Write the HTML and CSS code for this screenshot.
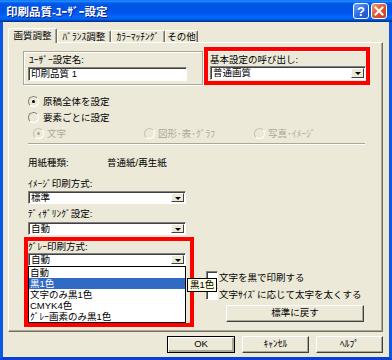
FILE: index.html
```html
<!DOCTYPE html>
<html lang="ja">
<head>
    <meta charset="UTF-8">
    <title>印刷品質-ﾕｰｻﾞｰ設定</title>
    <link rel="stylesheet" href="styles.css">
</head>
<body>

<div class="window">
    <div class="titlebar">
        <span class="title">印刷品質-ﾕｰｻﾞｰ設定</span>
        <span class="tb-btn help">?</span>
        <span class="tb-btn close">
            <svg width="10" height="10" viewBox="0 0 10 10"><path d="M1.5 1.5 L8.5 8.5 M8.5 1.5 L1.5 8.5" stroke="#fff" stroke-width="2" stroke-linecap="square"/></svg>
        </span>
    </div>

    <div class="frame">
        <div class="tabs">
            <div class="tab active" style="width:49px">画質調整</div>
            <div class="tab" style="width:54px">ﾊﾞﾗﾝｽ調整</div>
            <div class="tab" style="width:54px">ｶﾗｰﾏｯﾁﾝｸﾞ</div>
            <div class="tab" style="width:33px">その他</div>
        </div>

        <div class="panel">
            <div class="top-row">
                <div class="group name-group">
                    <div class="label">ﾕｰｻﾞｰ設定名:</div>
                    <div class="textbox">印刷品質 1</div>
                </div>
                <div class="mark preset">
                    <div class="label">基本設定の呼び出し:</div>
                    <div class="combo wide"><span>普通画質</span><i class="arrow"></i></div>
                </div>
            </div>

            <div class="radios">
                <div class="radio-row"><span class="radio on"></span>原稿全体を設定</div>
                <div class="radio-row"><span class="radio"></span>要素ごとに設定</div>
                <div class="radio-row sub disabled">
                    <div class="opt"><span class="radio on"></span>文字</div>
                    <div class="opt"><span class="radio"></span>図形･表･ｸﾞﾗﾌ</div>
                    <div class="opt"><span class="radio"></span>写真･ｲﾒｰｼﾞ</div>
                </div>
            </div>

            <div class="sep"></div>

            <div class="lower">
                <div class="left-col">
                    <div class="paper"><span class="paper-label">用紙種類:</span><span>普通紙/再生紙</span></div>

                    <div class="field-label first">ｲﾒｰｼﾞ印刷方式:</div>
                    <div class="combo"><span>標準</span><i class="arrow"></i></div>

                    <div class="field-label">ﾃﾞｨｻﾞﾘﾝｸﾞ設定:</div>
                    <div class="combo"><span>自動</span><i class="arrow"></i></div>

                    <div class="mark gray">
                        <div class="field-label">ｸﾞﾚｰ印刷方式:</div>
                        <div class="combo"><span>自動</span><i class="arrow"></i></div>
                        <div class="droplist">
                            <div class="item">自動</div>
                            <div class="item selected">黒1色</div>
                            <div class="item">文字のみ黒1色</div>
                            <div class="item">CMYK4色</div>
                            <div class="item">ｸﾞﾚｰ画素のみ黒1色</div>
                        </div>
                        <div class="tooltip">黒1色</div>
                    </div>
                </div>

                <div class="right-col">
                    <div class="check-row"><span class="checkbox"></span>文字を黒で印刷する</div>
                    <div class="check-row"><span class="checkbox"></span>文字ｻｲｽﾞに応じて太字を太くする</div>
                    <div class="button reset">標準に戻す</div>
                </div>
            </div>
        </div>

        <div class="buttons">
            <div class="button default" style="width:68px">OK</div>
            <div class="button" style="width:67px">ｷｬﾝｾﾙ</div>
            <div class="button" style="width:67px">ﾍﾙﾌﾟ</div>
        </div>
    </div>
</div>

</body>
</html>
```

FILE: styles.css
```css
* {
    box-sizing: border-box;
}
body {
    margin: 0;
    font-family: "Liberation Sans", "Noto Sans CJK JP", sans-serif;
    font-size: 9.5px;
    color: #000;
    background: #ECE9D8;
}
.window {
    width: 392px;
    height: 360px;
    display: flex;
    flex-direction: column;
}
.titlebar {
    height: 22px;
    display: flex;
    align-items: center;
    padding: 0 5px 0 6px;
    background: linear-gradient(to bottom, #0058EE 0%, #3593FF 4%, #288EFF 6%, #127DFF 8%, #036FFC 10%, #0262EE 14%, #0057E5 20%, #0054E3 24%, #0055EB 56%, #005BF5 66%, #026AFE 76%, #0062EF 86%, #0052D6 92%, #0040AB 94%, #003092 100%);
}
.title {
    flex: 1;
    color: #fff;
    font-weight: bold;
    font-size: 11.5px;
    text-shadow: 1px 1px #0A1E8C;
}
.tb-btn {
    width: 16px;
    height: 16px;
    margin-left: 2px;
    border: 1px solid #fff;
    border-radius: 3px;
    display: flex;
    align-items: center;
    justify-content: center;
    color: #fff;
    font-weight: bold;
    font-size: 13px;
}
.help {
    background: linear-gradient(135deg, #6DA2F8, #2663DE 60%, #1F55CC);
}
.close {
    background: linear-gradient(135deg, #F0A07E, #E0562F 50%, #C3401F);
}
.frame {
    flex: 1;
    background: #ECE9D8;
    border-left: 3px solid #0B58E6;
    border-right: 3px solid #0B58E6;
    border-bottom: 3px solid #0841D3;
    padding: 6px 6px 0 5px;
}

/* tabs */
.tabs {
    display: flex;
    align-items: flex-end;
    height: 14px;
}
.tab {
    height: 12px;
    line-height: 11px;
    text-align: center;
    border-top: 1px solid #fff;
    border-left: 1px solid #fff;
    border-right: 1px solid #716F64;
    box-shadow: inset -1px 0 #ACA899;
    border-radius: 2px 2px 0 0;
    white-space: nowrap;
}
.tab.active {
    height: 15px;
    line-height: 13px;
    margin-bottom: -1px;
    position: relative;
    z-index: 1;
    background: #ECE9D8;
}
.panel {
    height: 290px;
    border: 1px solid;
    border-color: #fff #716F64 #716F64 #fff;
    box-shadow: inset -1px -1px #ACA899;
    padding-top: 4px;
}

/* top row */
.top-row {
    display: flex;
    align-items: flex-start;
    padding-left: 14px;
}
.group {
    border: 1px solid #ACA899;
    box-shadow: inset 1px 1px #fff, 1px 1px #fff;
}
.name-group {
    margin-top: 4px;
    width: 180px;
    height: 34px;
    padding: 2px 0 0 4px;
}
.label {
    line-height: 12px;
    padding-left: 1px;
    white-space: nowrap;
}
.textbox {
    margin-top: 1px;
    width: 159px;
    height: 14px;
    line-height: 12px;
    padding-left: 2px;
    background: #fff;
    border: 1px solid;
    border-color: #808080 #fff #fff #808080;
    box-shadow: inset 1px 1px #404040;
}
.mark {
    border: 4px solid #FF0000;
}
.preset {
    margin-left: 1px;
    width: 166px;
    height: 38px;
    padding: 2px 0 0 2px;
    box-shadow: inset 0 1px #fff;
}
.preset .label {
    padding-left: 0;
    padding-top: 1px;
    line-height: 12px;
}

/* combo boxes */
.combo {
    width: 158px;
    height: 13px;
    display: flex;
    background: #fff;
    border: 1px solid;
    border-color: #808080 #fff #fff #808080;
    box-shadow: inset 1px 1px #404040;
    padding: 1px 1px 1px 2px;
}
.combo.wide {
    width: 156px;
    height: 14px;
}
.combo span {
    flex: 1;
    line-height: 11px;
    margin-top: -1px;
    white-space: nowrap;
}
.arrow {
    width: 13px;
    background: #ECE9D8;
    border: 1px solid;
    border-color: #fff #404040 #404040 #fff;
    position: relative;
}
.arrow::after {
    content: "";
    position: absolute;
    left: 3px;
    top: 3px;
    border-left: 3px solid transparent;
    border-right: 3px solid transparent;
    border-top: 3px solid #000;
}

/* radios */
.radios {
    margin-top: 8px;
    padding-left: 19px;
}
.radio-row {
    height: 16px;
    display: flex;
    align-items: center;
    white-space: nowrap;
}
.radio {
    width: 11px;
    height: 11px;
    border-radius: 50%;
    margin-right: 4px;
    border: 1px solid;
    border-color: #808080 #fff #fff #808080;
    background: #ECE9D8;
    position: relative;
}
.radio.on::after {
    content: "";
    position: absolute;
    left: 3px;
    top: 3px;
    width: 3px;
    height: 3px;
    border-radius: 50%;
    background: #000;
}
.radio-row.sub {
    padding-left: 5px;
    display: grid;
    grid-template-columns: 111px 110px auto;
}
.opt {
    display: flex;
    align-items: center;
}
.disabled {
    color: #ACA899;
}
.disabled .radio {
    margin-right: 3px;
    border-color: #C5C2B2 #fff #fff #C5C2B2;
}
.disabled .radio.on::after {
    background: #ACA899;
}
.sep {
    margin: 2px 17px 0 19px;
    height: 2px;
    border-top: 1px solid #ACA899;
    border-bottom: 1px solid #fff;
}

/* lower part */
.lower {
    margin-top: 12px;
    padding-left: 15px;
    display: flex;
}
.left-col {
    width: 170px;
}
.left-col > .combo,
.left-col > .field-label,
.paper {
    margin-left: 4px;
}
.paper {
    line-height: 12px;
    display: flex;
    white-space: nowrap;
}
.paper-label {
    width: 79px;
}
.field-label {
    line-height: 12px;
    margin-top: 4px;
    margin-bottom: 2px;
    white-space: nowrap;
}
.field-label.first {
    margin-top: 9px;
    margin-bottom: 1px;
}
.gray {
    margin-top: 2px;
    position: relative;
}
.gray .field-label {
    margin: 0;
}
.droplist {
    width: 158px;
    background: #fff;
    border: 1px solid #000;
}
.item {
    height: 11px;
    line-height: 11px;
    padding-left: 1px;
    white-space: nowrap;
}
.item.selected {
    background: #316AC5;
    color: #fff;
}
.tooltip {
    position: absolute;
    left: 159px;
    top: 37px;
    z-index: 2;
    padding: 0 2px;
    height: 14px;
    line-height: 12px;
    background: #FFFFE1;
    border: 1px solid #000;
    white-space: nowrap;
}
.right-col {
    margin-left: 12px;
    width: 158px;
    display: flex;
    flex-direction: column;
    justify-content: flex-end;
    padding-bottom: 5px;
}
.check-row {
    height: 12px;
    margin-bottom: 5px;
    display: flex;
    align-items: center;
    white-space: nowrap;
}
.checkbox {
    width: 12px;
    height: 12px;
    margin-right: 1px;
    background: #fff;
    border: 1px solid;
    border-color: #808080 #fff #fff #808080;
    box-shadow: inset 1px 1px #404040;
}
.reset {
    width: 138px;
    margin-left: 20px;
}

/* push buttons */
.button {
    height: 17px;
    line-height: 14px;
    text-align: center;
    background: #ECE9D8;
    border: 1px solid;
    border-color: #fff #404040 #404040 #fff;
    box-shadow: inset -1px -1px #ACA899;
    white-space: nowrap;
}
.buttons {
    margin-top: 4px;
    display: flex;
    justify-content: flex-end;
    gap: 7px;
}
.button.default {
    border-color: #000;
    box-shadow: inset 1px 1px #fff, inset -2px -2px #ACA899;
}
```
